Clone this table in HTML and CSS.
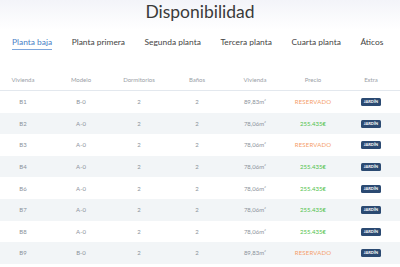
FILE: index.html
```html
<!DOCTYPE html>
<html lang="es">
<head>
<meta charset="utf-8">
<link rel="stylesheet" href="styles.css">
</head>
<body>
<div class="page">
  <h1 class="title">Disponibilidad</h1>
  <nav class="tabs">
    <a class="tab active">Planta baja</a>
    <a class="tab">Planta primera</a>
    <a class="tab">Segunda planta</a>
    <a class="tab">Tercera planta</a>
    <a class="tab">Cuarta planta</a>
    <a class="tab">Áticos</a>
  </nav>
  <div class="table">
    <div class="row head">
      <div>Vivienda</div><div>Modelo</div><div>Dormitorios</div><div>Baños</div><div>Vivienda</div><div>Precio</div><div>Extra</div>
    </div>
    <div class="row">
      <div>B1</div><div>B-0</div><div>2</div><div>2</div><div>89,83m²</div><div class="res">RESERVADO</div><div><span class="badge">JARDÍN</span></div>
    </div>
    <div class="row alt">
      <div>B2</div><div>A-0</div><div>2</div><div>2</div><div>78,06m²</div><div class="price">255.435€</div><div><span class="badge">JARDÍN</span></div>
    </div>
    <div class="row">
      <div>B3</div><div>A-0</div><div>2</div><div>2</div><div>78,06m²</div><div class="res">RESERVADO</div><div><span class="badge">JARDÍN</span></div>
    </div>
    <div class="row alt">
      <div>B4</div><div>A-0</div><div>2</div><div>2</div><div>78,06m²</div><div class="price">255.435€</div><div><span class="badge">JARDÍN</span></div>
    </div>
    <div class="row">
      <div>B6</div><div>A-0</div><div>2</div><div>2</div><div>78,06m²</div><div class="price">255.435€</div><div><span class="badge">JARDÍN</span></div>
    </div>
    <div class="row alt">
      <div>B7</div><div>A-0</div><div>2</div><div>2</div><div>78,06m²</div><div class="price">255.435€</div><div><span class="badge">JARDÍN</span></div>
    </div>
    <div class="row">
      <div>B8</div><div>A-0</div><div>2</div><div>2</div><div>78,06m²</div><div class="price">255.435€</div><div><span class="badge">JARDÍN</span></div>
    </div>
    <div class="row alt">
      <div>B9</div><div>B-0</div><div>2</div><div>2</div><div>89,83m²</div><div class="res">RESERVADO</div><div><span class="badge">JARDÍN</span></div>
    </div>
  </div>
</div>
</body>
</html>
```
FILE: styles.css
```css
html, body {
  margin: 0;
  padding: 0;
  background: #fff;
}
body {
  font-family: "Lato", "Open Sans", sans-serif;
  color: #333;
  overflow: hidden;
}
.page {
  background: linear-gradient(180deg, #f3f4f9 0px, #ffffff 30px);
}
.title {
  margin: 0;
  padding-top: 1px;
  text-align: center;
  font-weight: normal;
  font-size: 17.5px;
  line-height: 22px;
  color: #3a3a3a;
}
.tabs {
  display: flex;
  gap: 19.6px;
  padding: 14px 0 0 12px;
  height: 25px;
  font-size: 8.4px;
  white-space: nowrap;
}
.tab {
  flex: none;
  color: #444;
  line-height: 11px;
  height: 12px;
}
.tab.active {
  color: #4a7fc6;
  border-bottom: 1px solid #7ea6dc;
}
.table {
  margin-left: -6px;
  width: 406px;
  margin-top: 7px;
}
.row {
  display: grid;
  grid-template-columns: repeat(7, 1fr);
  height: 21.6px;
  align-items: center;
  text-align: center;
  font-size: 6px;
  color: #8b929b;
}
.row.head {
  height: 21px;
  border-bottom: 1px solid #e3e8ee;
  color: #9aa0a6;
}
.row.alt {
  background: #f2f5f7;
}
.res {
  color: #f5a06a;
  letter-spacing: 0.2px;
}
.price {
  color: #4fc24a;
}
.badge {
  display: inline-block;
  background: #2b4a72;
  color: #fff;
  font-size: 4px;
  font-weight: bold;
  line-height: 8px;
  padding: 0 3px;
  border-radius: 1.5px;
}
```
